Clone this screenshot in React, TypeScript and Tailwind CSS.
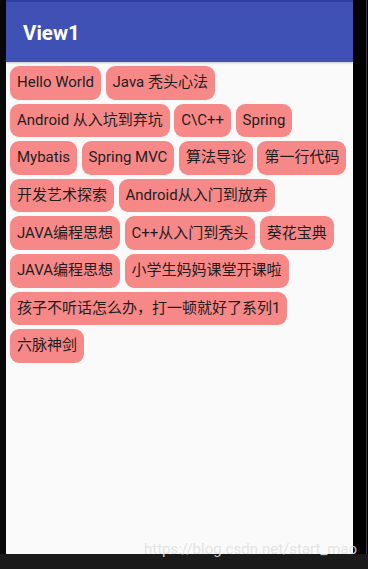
import React from "react";

const tags = [
  "Hello World",
  "Java 秃头心法",
  "Android 从入坑到弃坑",
  "C\\C++",
  "Spring",
  "Mybatis",
  "Spring MVC",
  "算法导论",
  "第一行代码",
  "开发艺术探索",
  "Android从入门到放弃",
  "JAVA编程思想",
  "C++从入门到秃头",
  "葵花宝典",
  "JAVA编程思想",
  "小学生妈妈课堂开课啦",
  "孩子不听话怎么办，打一顿就好了系列1",
  "六脉神剑",
];

export default function App() {
  return (
    <div
      className="relative w-[368px] h-[569px] bg-black flex flex-col overflow-hidden"
      style={{ fontFamily: 'Roboto, "Noto Sans CJK SC", sans-serif' }}
    >
      <div className="flex h-[554px]">
        <div className="w-[6px] bg-[#080808]" />
        <div className="w-[347px] flex flex-col bg-[#fafafa]">
          <div className="h-[2px] bg-[#303f9f]" />
          <div className="h-[60px] bg-[#3f51b5] flex items-center pl-[17px] shadow-[0_1px_2px_rgba(0,0,0,0.2)]">
            <span className="text-white text-[20.5px] font-bold leading-none pt-[2px]">View1</span>
          </div>
          <div className="flex-1 flex flex-wrap content-start gap-x-[4.5px] gap-y-[4px] pt-[4px] pl-[4px] pr-[2px]">
            {tags.map((t, i) => (
              <div
                key={i}
                className="h-[33.6px] px-[7px] flex items-center rounded-[9px] bg-[#f78888] text-[#1e1e1e] text-[15px] leading-none whitespace-nowrap"
              >
                {t}
              </div>
            ))}
          </div>
        </div>
        <div className="flex-1 flex justify-end bg-black">
          <div className="w-[1px] bg-[#3a3a3a] mr-[1px]" />
        </div>
      </div>
      <div className="flex-1 bg-[#1a1a1a]" />
      <div className="absolute left-[144px] top-[542px] text-[15px] leading-none text-[rgba(225,225,225,0.9)] whitespace-nowrap">
        https://blog.csdn.net/start_mao
      </div>
    </div>
  );
}
